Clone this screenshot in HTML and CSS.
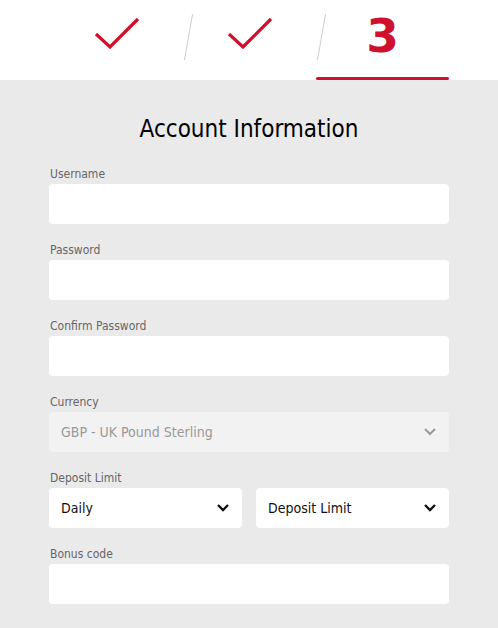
FILE: index.html
```html
<!DOCTYPE html>
<html lang="en">
<head>
    <meta charset="UTF-8">
    <meta name="viewport" content="width=device-width, initial-scale=1.0">
    <title>Account Information</title>
    <link rel="stylesheet" href="styles.css">
</head>
<body>
    <!-- Registration steps -->
    <div class="steps">
        <div class="step done">
            <svg width="46" height="32" viewBox="0 0 46 32"><path d="M2 17 L16 30 L44 2" fill="none" stroke="#d0112b" stroke-width="3.2"/></svg>
        </div>
        <div class="step done">
            <svg width="46" height="32" viewBox="0 0 46 32"><path d="M2 17 L16 30 L44 2" fill="none" stroke="#d0112b" stroke-width="3.2"/></svg>
        </div>
        <div class="step active">3</div>
    </div>

    <div class="form-area">
        <h1>Account Information</h1>

        <label class="field-label" for="username">Username</label>
        <input type="text" id="username" class="field">

        <label class="field-label" for="password">Password</label>
        <input type="password" id="password" class="field">

        <label class="field-label" for="confirmPassword">Confirm Password</label>
        <input type="password" id="confirmPassword" class="field">

        <label class="field-label">Currency</label>
        <div class="select disabled">
            <span>GBP - UK Pound Sterling</span>
            <svg width="12" height="8" viewBox="0 0 12 8"><path d="M1 1 L6 6 L11 1" fill="none" stroke="#999" stroke-width="2"/></svg>
        </div>

        <label class="field-label">Deposit Limit</label>
        <div class="select-row">
            <div class="select">
                <span>Daily</span>
                <svg width="12" height="8" viewBox="0 0 12 8"><path d="M1 1 L6 6 L11 1" fill="none" stroke="#111" stroke-width="2.4"/></svg>
            </div>
            <div class="select">
                <span>Deposit Limit</span>
                <svg width="12" height="8" viewBox="0 0 12 8"><path d="M1 1 L6 6 L11 1" fill="none" stroke="#111" stroke-width="2.4"/></svg>
            </div>
        </div>

        <label class="field-label" for="bonusCode">Bonus code</label>
        <input type="text" id="bonusCode" class="field">
    </div>
</body>
</html>
```

FILE: styles.css
```css
body {
    font-family: "DejaVu Sans Condensed", "DejaVu Sans", sans-serif;
    margin: 0;
    background-color: #eaeaea;
}
.steps {
    display: flex;
    background-color: #fff;
    height: 80px;
    padding: 0 49px 0 50px;
}
.step {
    flex: 1;
    display: flex;
    align-items: center;
    justify-content: center;
    position: relative;
}
.step + .step::before {
    content: "";
    position: absolute;
    left: 5px;
    top: 14px;
    width: 1px;
    height: 46px;
    background-color: #ccc;
    transform: skewX(-10deg);
}
.step.done svg {
    margin-top: -14px;
}
.step.active {
    color: #d0112b;
    font-family: "DejaVu Sans", sans-serif;
    font-weight: bold;
    font-size: 47px;
    padding-bottom: 10px;
}
.step.active::after {
    content: "";
    position: absolute;
    left: 0;
    right: 0;
    bottom: 0;
    height: 3px;
    border-radius: 2px;
    background-color: #d0112b;
}
.form-area {
    padding: 35px 49px 22px 49px;
}
h1 {
    text-align: center;
    font-weight: normal;
    font-size: 24px;
    margin: 0 0 24px 0;
    color: #000;
}
.field-label {
    display: block;
    font-size: 12px;
    color: #666;
    margin: 0 0 3px 1px;
    line-height: 14px;
}
.field {
    display: block;
    box-sizing: border-box;
    width: 100%;
    height: 40px;
    border: none;
    border-radius: 4px;
    background-color: #fff;
    margin-bottom: 19px;
}
.select {
    box-sizing: border-box;
    height: 40px;
    border-radius: 4px;
    background-color: #fff;
    display: flex;
    align-items: center;
    justify-content: space-between;
    padding: 0 13px 0 12px;
    font-size: 14px;
    color: #111;
    margin-bottom: 19px;
}
.select.disabled {
    background-color: #f2f2f2;
    color: #999;
}
.select-row {
    display: flex;
    gap: 14px;
}
.select-row .select {
    flex: 1;
}
```
